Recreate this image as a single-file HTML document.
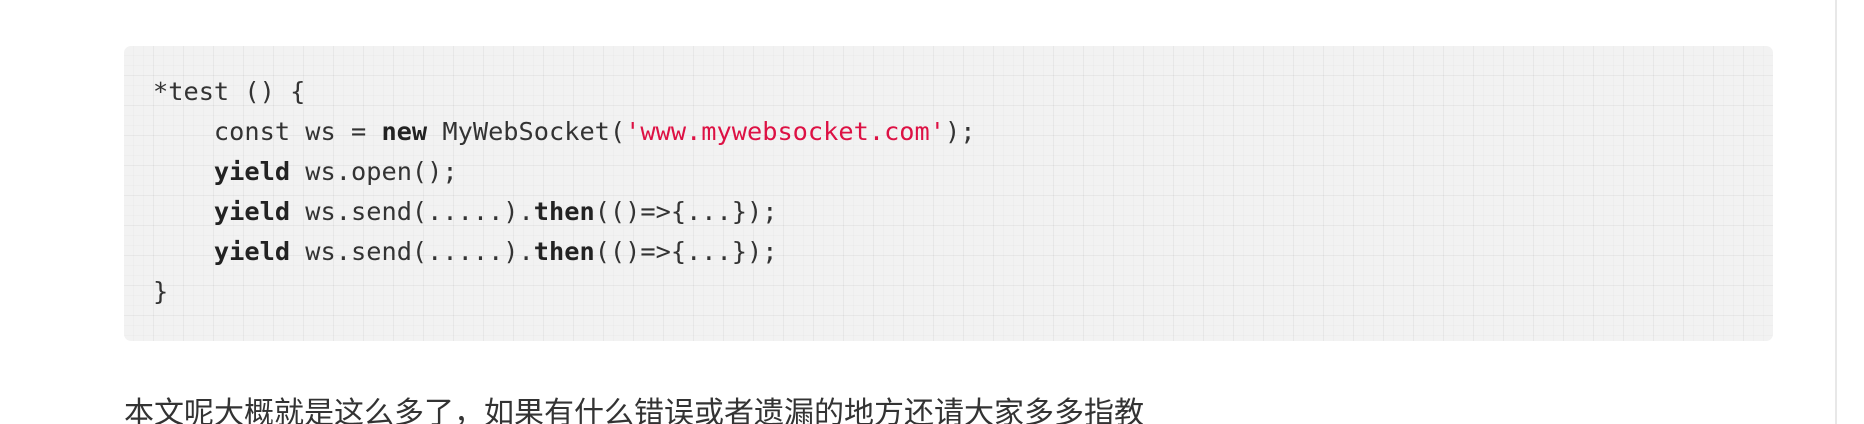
<!DOCTYPE html>
<html><head><meta charset="utf-8"><style>
html,body{margin:0;padding:0;background:#fff;width:1864px;height:424px;overflow:hidden;position:relative}
.box{position:absolute;left:124px;top:46px;width:1649px;height:295px;border-radius:7px;
background-color:#f2f2f2;
background-image:linear-gradient(90deg,rgba(0,0,0,0.03) 1px,transparent 1px),linear-gradient(rgba(0,0,0,0.03) 1px,transparent 1px),linear-gradient(90deg,rgba(0,0,0,0.015) 1px,transparent 1px),linear-gradient(rgba(0,0,0,0.015) 1px,transparent 1px);
background-size:30px 30px,30px 30px,10px 10px,10px 10px;background-position:-1px -1px}
pre{position:absolute;left:153px;top:72px;margin:0;font-family:"DejaVu Sans Mono","Liberation Mono",monospace;font-size:25.3px;line-height:40px;color:#333}
b{font-weight:bold;color:#222}
.s{color:#dd1144}
.p{position:absolute;left:124px;top:394px;margin:0;font-family:"Liberation Sans","Noto Sans CJK SC",sans-serif;font-size:30px;line-height:40px;color:#333;white-space:nowrap}
.sb{position:absolute;left:1835px;top:0;width:2px;height:424px;background:#e8e8e8}
</style></head><body>
<div class="box"></div>
<pre>*test () {
    const ws = <b>new</b> MyWebSocket(<span class="s">'www.mywebsocket.com'</span>);
    <b>yield</b> ws.open();
    <b>yield</b> ws.send(.....).<b>then</b>(()=>{...});
    <b>yield</b> ws.send(.....).<b>then</b>(()=>{...});
}</pre>
<p class="p">本文呢大概就是这么多了，如果有什么错误或者遗漏的地方还请大家多多指教</p>
<div class="sb"></div>
</body></html>
